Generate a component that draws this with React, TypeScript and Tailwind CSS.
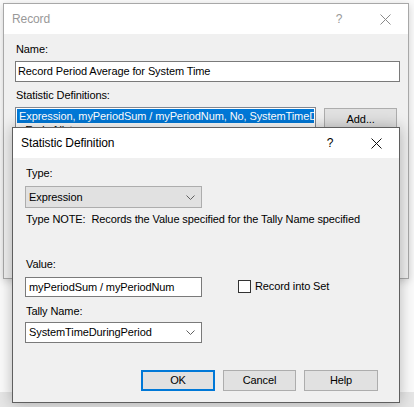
import React from "react";

const Chevron = () => (
  <svg width="9" height="5" viewBox="0 0 9 5" className="shrink-0">
    <polyline points="0.5,0.5 4.5,4.5 8.5,0.5" fill="none" stroke="#606060" strokeWidth="1" />
  </svg>
);

const CloseX = ({ color }: { color: string }) => (
  <svg width="11" height="11" viewBox="0 0 11 11">
    <line x1="0.5" y1="0.5" x2="10.5" y2="10.5" stroke={color} strokeWidth="1" />
    <line x1="10.5" y1="0.5" x2="0.5" y2="10.5" stroke={color} strokeWidth="1" />
  </svg>
);

const TitleBar = ({ title, dim }: { title: string; dim?: boolean }) => (
  <div className="h-[30px] bg-white flex items-center shrink-0">
    <span className={`pl-[8px] text-[12px] ${dim ? "text-[#999999]" : "text-black"}`}>{title}</span>
    <div className="ml-auto flex h-full">
      <div className={`w-[46px] flex items-center justify-center text-[12px] ${dim ? "text-[#999999]" : "text-black"}`}>?</div>
      <div className="w-[46px] flex items-center justify-center">
        <CloseX color={dim ? "#8a8a8a" : "#111111"} />
      </div>
    </div>
  </div>
);

const WinButton = ({ label, isDefault }: { label: string; isDefault?: boolean }) => (
  <button
    type="button"
    className={`w-full h-[21px] bg-[#e1e1e1] text-black flex items-center justify-center ${
      isDefault ? "border-2 border-[#0078d7]" : "border border-[#adadad]"
    }`}
  >
    {label}
  </button>
);

export default function App() {
  return (
    <div className="relative w-[414px] h-[407px] bg-[#fbfbfb] overflow-hidden flex flex-col font-['Liberation_Sans',sans-serif] text-[11px] tracking-[-0.1px] leading-[15px]">
      {/* Record dialog (behind) */}
      <div className="mt-[3px] ml-[3px] w-[406px] h-[276px] border border-[#a8a8a8] shadow-[0_2px_8px_rgba(0,0,0,0.18)] flex flex-col bg-[#f0f0f0]">
        <TitleBar title="Record" dim />
        <div className="flex-1 px-[11px] pt-[8px] flex flex-col text-black">
          <div className="ml-[1px]">Name:</div>
          <div className="mt-[4px] h-[21px] w-[385px] bg-white border border-[#7a7a7a] flex items-center px-[2px]">
            Record Period Average for System Time
          </div>
          <div className="mt-[6px] ml-[1px]">Statistic Definitions:</div>
          <div className="mt-[4px] flex gap-[8px]">
            <div className="w-[303px] h-[110px] bg-white border border-[#828790] p-[1px] overflow-hidden">
              <div className="h-[14px] bg-[#0078d7] text-white leading-[14px] pl-[2px] whitespace-nowrap overflow-hidden">
                Expression, myPeriodSum / myPeriodNum, No, SystemTimeDuringPeriod
              </div>
              <div className="h-[14px] leading-[14px] pl-[2px]">&lt;End of list&gt;</div>
            </div>
            <div className="mt-[1px] w-[73px]">
              <button
                type="button"
                className="w-full h-[23px] bg-[#e1e1e1] border border-[#adadad] text-black"
              >
                Add...
              </button>
            </div>
          </div>
        </div>
      </div>

      <div className="mt-auto h-[15px] bg-[#e6e6e6]" />

      {/* Statistic Definition dialog (on top) */}
      <div className="absolute left-[12px] top-[127px] w-[388px] h-[276px] border border-[#5f5f5f] bg-[#f0f0f0] shadow-[0_0_14px_rgba(0,0,0,0.28)] flex flex-col">
        <TitleBar title="Statistic Definition" />
        <div className="flex-1 px-[12px] pt-[8px] flex flex-col text-black">
          <div className="ml-[1px]">Type:</div>
          <div className="mt-[5px] h-[22px] w-[177px] bg-[#e1e1e1] border border-[#adadad] flex items-center pl-[3px] pr-[6px]">
            <span className="flex-1">Expression</span>
            <Chevron />
          </div>
          <div className="mt-[4px] ml-[1px] whitespace-pre">Type NOTE:  Records the Value specified for the Tally Name specified</div>

          <div className="mt-[30px] ml-[1px]">Value:</div>
          <div className="mt-[5px] flex items-start">
            <div className="h-[20px] w-[177px] bg-white border border-[#7a7a7a] flex items-center px-[3px]">
              myPeriodSum / myPeriodNum
            </div>
            <label className="ml-[36px] mt-[2px] flex items-center gap-[4px]">
              <span className="w-[13px] h-[13px] border border-[#333333] bg-white" />
              <span>Record into Set</span>
            </label>
          </div>

          <div className="mt-[7px] ml-[1px]">Tally Name:</div>
          <div className="mt-[3px] h-[21px] w-[177px] bg-white border border-[#7a7a7a] flex items-center pl-[3px] pr-[6px]">
            <span className="flex-1">SystemTimeDuringPeriod</span>
            <Chevron />
          </div>

          <div className="mt-[27px] flex justify-end gap-[8px] pr-[9px]">
            <div className="w-[74px]">
              <WinButton label="OK" isDefault />
            </div>
            <div className="w-[73px]">
              <WinButton label="Cancel" />
            </div>
            <div className="w-[74px]">
              <WinButton label="Help" />
            </div>
          </div>
        </div>
      </div>
    </div>
  );
}
